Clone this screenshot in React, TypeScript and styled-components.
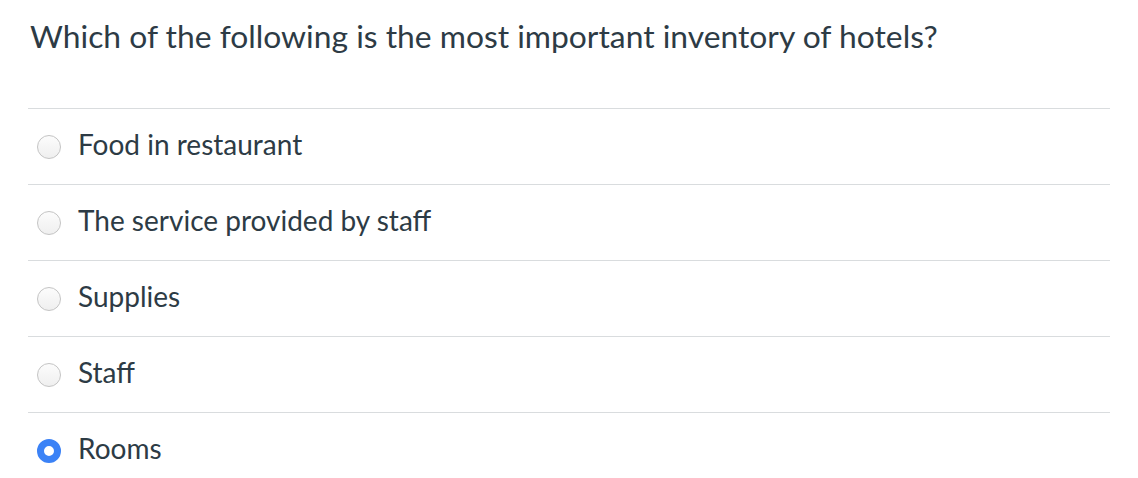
import React from "react";
import styled, { createGlobalStyle } from "styled-components";

const Global = createGlobalStyle`
  html, body { margin: 0; padding: 0; background: #ffffff; }
  body { font-family: Lato, "Noto Sans", sans-serif; color: #2d3b45; }
`;

const Page = styled.div`
  width: 1138px;
  height: 478px;
  box-sizing: border-box;
  padding: 0 28px 0 28px;
  overflow: hidden;
`;

const Question = styled.h1`
  margin: 0;
  padding: 15px 0 0 2px;
  height: 108px;
  box-sizing: border-box;
  font-size: 31.8px;
  line-height: 42px;
  font-weight: 400;
  color: #2d3b45;
`;

const List = styled.div`
  display: flex;
  flex-direction: column;
`;

const Row = styled.label`
  display: flex;
  align-items: center;
  gap: 17px;
  height: 76px;
  box-sizing: border-box;
  border-top: 1px solid #d9dcde;
  padding: 0 0 0 9px;
  font-size: 28px;
  color: #2d3b45;
`;

const Label = styled.span`
  line-height: 34px;
  padding-bottom: 6px;
`;

const Radio = styled.span<{ $checked?: boolean }>`
  width: 24px;
  height: 24px;
  box-sizing: border-box;
  border-radius: 50%;
  flex: none;
  background: ${(p) => (p.$checked ? "#ffffff" : "linear-gradient(#fcfcfc, #efefef)")};
  border: ${(p) => (p.$checked ? "7px solid #3b82f6" : "1px solid #c4c4c4")};
`;

const options = [
  { label: "Food in restaurant", checked: false },
  { label: "The service provided by staff", checked: false },
  { label: "Supplies", checked: false },
  { label: "Staff", checked: false },
  { label: "Rooms", checked: true },
];

export default function App() {
  return (
    <>
      <Global />
      <Page>
        <Question>Which of the following is the most important inventory of hotels?</Question>
        <List>
          {options.map((o) => (
            <Row key={o.label}>
              <Radio $checked={o.checked} />
              <Label>{o.label}</Label>
            </Row>
          ))}
        </List>
      </Page>
    </>
  );
}
